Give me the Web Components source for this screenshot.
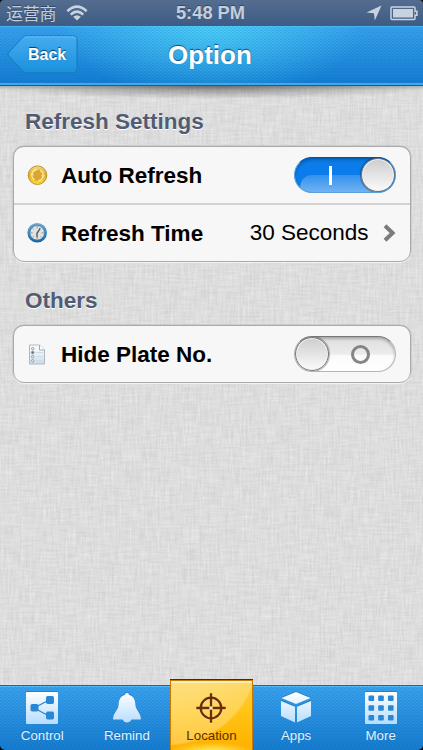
<!DOCTYPE html>
<html lang="en">
<head>
<meta charset="utf-8">
<title>Option</title>
<style>
html,body{margin:0;height:100%;background:#000;overflow:hidden}
body{font-family:"Liberation Sans","Noto Sans CJK SC",sans-serif}
</style>
</head>
<body>
<option-screen></option-screen>
<script>
const define = (name, html) => customElements.define(name, class extends HTMLElement {
  connectedCallback() {
    if (this.shadowRoot) return;
    const t = document.createElement('template');
    t.innerHTML = html(this);
    this.attachShadow({mode:'open'}).append(t.content.cloneNode(true));
  }
});

/* Fine dot mesh shared by both blue bars */
const mesh = 'radial-gradient(circle at 1px 1px,rgba(0,50,120,.17) .5px,transparent 1.1px) 0 0/4px 3px,radial-gradient(circle at 1px 1px,rgba(0,50,120,.17) .5px,transparent 1.1px) 2px 1.5px/4px 3px';

define('status-bar', () => `
<style>
:host{display:grid;grid-template-columns:1fr auto 1fr;align-items:center;height:26px;box-sizing:border-box;padding:0 5px 0 6px;background:linear-gradient(#546d8f,#3d5b84);color:#c5cedb;text-shadow:0 -1px 0 rgba(30,45,75,.55);border-radius:4px 4px 0 0}
.l,.r{display:flex;align-items:center}
.r{justify-content:flex-end;gap:8px}
.l span{font:17px/26px "Noto Sans CJK SC",sans-serif;letter-spacing:-.2px}
.l svg{margin-left:10px}
b{font-size:18.3px;line-height:26px;margin-right:3px}
svg{display:block}
</style>
<div class="l"><span>运营商</span><svg width="22" height="16" viewBox="0 0 22 16" fill="none" stroke="#c9d3df" stroke-width="2.6"><path d="M1.4 6.2Q11-2.8 20.6 6.2M4.7 9.6Q11 3.7 17.3 9.6"/><path d="M7.2 11.8Q11 8.6 14.8 11.8L11 15.6Z" fill="#c9d3df" stroke="none"/></svg></div>
<b>5:48 PM</b>
<div class="r"><svg width="16" height="16" viewBox="0 0 16 16"><path d="M15.5.5 8.8 15.5 8 8.3.5 7.6Z" fill="#c9d3df"/></svg>
<svg width="28" height="15" viewBox="0 0 28 15"><rect x="1" y="1" width="24" height="12.5" rx="1" fill="none" stroke="#c9d3df" stroke-width="1.5"/><path d="M3 3h20v8.5H3zM25 4.5h2.7v5.5H25z" fill="#c9d3df"/><path d="M24.6 6h1.5v2.5h-1.5z" fill="#4a6489"/></svg></div>`);

define('nav-bar', () => `
<style>
:host{display:grid;grid-template-columns:1fr auto 1fr;align-items:center;height:60px;box-sizing:border-box;padding:0 9px 2px 6px;
background:${mesh},radial-gradient(ellipse 155px 75px at 50% -5%,rgba(83,224,255,.8),rgba(60,190,250,0) 100%),linear-gradient(#38a6f2,#137fd6);
border-bottom:1px solid #1b5c8b;box-shadow:inset 0 -2px 0 #3cabe9,inset 0 1px 0 rgba(90,200,255,.5);position:relative;z-index:1}
h1{margin:0;font-size:26px;line-height:58px;color:#fff;text-shadow:0 -1px 1px rgba(0,45,100,.75)}
.b{display:grid;width:72px;height:40px;align-items:center;margin-top:0}
.b>*{grid-area:1/1}
.b span{color:#fff;font-weight:bold;font-size:16px;padding:0 0 0 22px;text-shadow:0 -1px 1px #063b70;z-index:1}
</style>
<div class="b"><svg width="72" height="40"><defs><linearGradient id="g" x2="0" y2="1"><stop stop-color="#46acf0"/><stop offset="1" stop-color="#1991dc"/></linearGradient></defs><path d="M17 2Q18.5 .8 21 .8H67Q71 .8 71 4.8V34Q71 37.8 67 37.8H21Q18.5 37.8 17 36.5L3 21.3Q.8 19.2 3 17Z" fill="url(#g)" stroke="#1679bd"/><path d="M18 2.6Q19 1.8 21 1.8H67Q70 1.8 70 4" fill="none" stroke="#74c5f8" opacity=".7"/></svg><span>Back</span></div>
<h1><slot></slot></h1><div></div>`);

/* Woven linen backdrop: two stretched noise layers crossed over each other */
define('linen-page', () => `
<style>
:host{display:grid;height:599px;background:#dadada;overflow:hidden}
svg,.c{grid-area:1/1}
.c{padding:21px 13px 0;background:radial-gradient(ellipse 55% 13px at 50% 0,rgba(0,0,0,.42),transparent),linear-gradient(rgba(0,0,0,.16),transparent 4px)}
</style>
<svg width="423" height="599"><defs>
<filter id="v" x="0" y="0" width="1" height="1" color-interpolation-filters="sRGB"><feTurbulence type="fractalNoise" baseFrequency=".5 .05" numOctaves="3" seed="4"/><feColorMatrix values=".16 0 0 0 .787 .16 0 0 0 .787 .16 0 0 0 .787 0 0 0 0 1"/></filter>
<filter id="h" x="0" y="0" width="1" height="1" color-interpolation-filters="sRGB"><feTurbulence type="fractalNoise" baseFrequency=".05 .5" numOctaves="3" seed="9"/><feColorMatrix values=".16 0 0 0 .787 .16 0 0 0 .787 .16 0 0 0 .787 0 0 0 0 1"/></filter></defs>
<rect width="423" height="599" filter="url(#v)"/><rect width="423" height="599" filter="url(#h)" opacity=".45"/></svg>
<div class="c"><slot></slot></div>`);

define('settings-group', el => `
<style>
:host{display:block;margin-bottom:24px}
h2{margin:0 0 10px 12px;font-size:22.5px;line-height:29px;color:#515b73;text-shadow:0 1px 0 #fff}
.box{box-sizing:border-box;width:398px;border:1.5px solid #aaa;border-radius:11px;background:#f7f7f7;box-shadow:0 1px 0 #f2f2f2,0 0 0 .5px #bbb;overflow:hidden}
</style>
<h2>${el.getAttribute('heading')}</h2><div class="box"><slot></slot></div>`);

define('settings-row', () => `
<style>
:host{display:flex;align-items:center;height:56px;padding:0 13.5px 0 13px;color:#000;font-size:22.5px}
:host([divided]){border-top:2px solid #d2d2d2;}
.i{display:flex;width:21px;margin-right:13px}
b{flex:1;padding-top:2px}
</style>
<div class="i"><slot name="icon"></slot></div><b><slot></slot></b><slot name="end"></slot>`);

define('row-value', () => `
<style>:host{display:flex;align-items:center;gap:14px}</style>
<span><slot></slot></span><svg width="14" height="18" viewBox="0 0 14 18"><path d="M2 1.8 9.6 9 2 16.2" fill="none" stroke="#7c7c7c" stroke-width="4"/></svg>`);

define('toggle-switch', el => {
  const on = el.hasAttribute('on');
  return `
<style>
:host{display:flex;align-items:center;justify-content:${on?'flex-end':'flex-start'};width:102px;height:36px;box-sizing:border-box;border-radius:18px;border:1px solid ${on?'#5b9fdd':'#b5b5b5'};border-top-color:${on?'#06509f':'#777'};
background:${on?'#0b7cea':'linear-gradient(#dedede,#ececec 50%,#fbfbfb 55%,#fff)'};box-shadow:inset 0 2px 3px rgba(0,0,0,.25);overflow:hidden;margin-right:.5px}
.k{width:34px;height:34px;box-sizing:border-box;border-radius:50%;border:1px solid #777;background:linear-gradient(#cdcdcd,#fbfbfb);box-shadow:0 0 1px 1px rgba(0,0,0,.3),inset 0 0 0 1px #f2f2f2;flex:none;z-index:2}
.t{flex:1;align-self:stretch;display:grid;place-items:center}
.t i,.t u{grid-area:1/1}
.t u{align-self:end;justify-self:stretch;height:17px;margin:0 -16px 0 5px;border-radius:12px 0 0 12px/14px 0 0 4px;background:linear-gradient(rgba(255,255,255,.16),rgba(255,255,255,.42))}
.t i{width:3px;height:19px;background:#fff;z-index:1;margin-left:4px}
.t s{width:19px;height:19px;box-sizing:border-box;border:3px solid #858585;border-radius:50%;margin-right:3px}
</style>${on?'<div class="t"><u></u><i></i></div><div class="k"></div>':'<div class="k"></div><div class="t"><s></s></div>'}`;
});

const rowIcons = {
refresh:`<defs><linearGradient id="a" x2="0" y2="1"><stop stop-color="#f4da79"/><stop offset=".5" stop-color="#e4ad25"/><stop offset="1" stop-color="#f7df35"/></linearGradient></defs><circle cx="10.5" cy="10.2" r="9.3" fill="url(#a)" stroke="#b38b2b" stroke-width=".9"/><circle cx="10.5" cy="10.2" r="5.6" fill="#dba436" stroke="#fbe88f" stroke-width="1.5" stroke-dasharray="13.6 4" transform="rotate(-60 10.5 10.2)"/><path d="M14 10.2h4l-2 2.6zM3 10.2h4l-2-2.6z" fill="#fbe88f"/>`,
clock:`<defs><linearGradient id="a" x2="0" y2="1"><stop stop-color="#6dacd3"/><stop offset="1" stop-color="#1663a4"/></linearGradient></defs><circle cx="10.2" cy="9.8" r="9.8" fill="url(#a)"/><g transform="translate(-.3 -.7)"><circle cx="10.5" cy="10.5" r="7.3" fill="#dfe2e2" stroke="#3c7398" stroke-width=".7"/><path d="M10.5 4v2M10.5 15v2M4 10.5h2M15 10.5h2M6 6l1 1M15 15l-1-1M6 15l1-1" stroke="#8c9499"/><path d="M13.6 5.8 10.3 11M10.3 10.5V15" stroke="#52595e" stroke-width="1.4" fill="none"/></g>`,
list:`<defs><linearGradient id="a" x2="0" y2="1"><stop stop-color="#fff"/><stop offset="1" stop-color="#cbdcea"/></linearGradient></defs><path d="M2.5 1h10l5 5v14h-15z" fill="url(#a)" stroke="#b2b7bd"/><path d="M12.5 1v5h5" fill="#fff" stroke="#a5abb2"/><g fill="#e8edf2" stroke="#9097a0" stroke-width=".9"><circle cx="5.7" cy="4.6" r="1.2"/><circle cx="5.7" cy="8.5" r="1.3" fill="#5a6b82"/><circle cx="5.7" cy="12.6" r="1.2"/><circle cx="5.7" cy="16.7" r="1.2"/></g><path d="M9 8.5h7M9 12.6h7M9 16.7h7" stroke="#cfdae5"/>`};
define('row-icon', el => `<style>:host{display:block;height:21px}svg{display:block}</style><svg width="21" height="21" viewBox="0 0 21 21">${rowIcons[el.getAttribute('name')]}</svg>`);

const tabIcons = {
control:`<rect width="32" height="32" rx="1" fill="url(#w)"/><path d="m8 16 15-8M8 16l15 8" stroke="#2888d6" stroke-width="1.4"/><g fill="#2888d6"><rect x="4.5" y="12" width="8" height="7.5" rx="1.7"/><rect x="20" y="4" width="8" height="8" rx="1.7"/><rect x="20" y="19.5" width="8" height="8" rx="1.7"/></g>`,
remind:`<path d="M16 .9Q17.9.9 18.2 3C22.6 4.3 24.1 7.5 24.4 12.5 24.8 19 29.8 20 30 27.4H20.5Q19 30.4 16 30.4T11.5 27.4H2C2.2 20 7.2 19 7.6 12.5 7.9 7.5 9.4 4.3 13.8 3Q14.1.9 16 .9Z" fill="url(#w)"/>`,
location:`<g fill="none" stroke="#6b2d08" stroke-width="2.3"><circle cx="16" cy="16" r="10.3"/><path d="M16 1.3V14.5M16 17.5V30.7M1.3 16H14.5M17.5 16H30.7"/><circle cx="16" cy="16" r="1.5" stroke="none" fill="#ffeebb"/></g>`,
apps:`<path d="M16 0 30.5 6 16 12 1.5 6ZM1 9l14 5.7V30.5L1 24zM31 9 17 14.7V30.5L31 24z" fill="url(#w)"/>`,
more:`<rect width="32" height="32" rx=".8" fill="url(#w)"/><g fill="#2888d6">${[3.5,13.2,23].map(y=>[3.5,13.2,23].map(x=>`<rect x="${x}" y="${y}" width="5.6" height="5.6" rx="1"/>`).join('')).join('')}</g>`};
define('tab-item', el => {
  const n = el.getAttribute('icon');
  return `
<style>
:host{display:flex;flex-direction:column;align-items:center;height:65px;box-sizing:border-box;padding-top:7px;color:#e0f2ff;font-size:13.3px;text-shadow:0 -1px 1px rgba(0,60,120,.3)}
svg{display:block;filter:drop-shadow(0 -1px 0 rgba(0,60,120,.25))}
span{line-height:16px;margin-top:4px}
:host([active]){width:83px;justify-self:center;margin-top:-5px;height:70px;padding-top:11px;color:#593000;text-shadow:none;border:solid #c87a08;border-width:1px 1px 0;
background:radial-gradient(ellipse 42px 9px at 50% 102%,#fff15e,transparent),radial-gradient(circle at -4px -27px,rgba(255,248,215,.42) 40px,rgba(255,248,215,.3) 90px,transparent 92px),linear-gradient(#fdcb3a,#ffc415 45%,#ffb000);box-shadow:inset 0 2px 0 #fff1b5,0 -1px 0 #4d2a0b}
:host([active]) svg{filter:drop-shadow(0 1px 0 rgba(255,255,255,.4))}
</style>
<svg width="32" height="32" viewBox="0 0 32 32"><defs><linearGradient id="w" gradientUnits="userSpaceOnUse" x1="0" y1="0" x2="0" y2="32"><stop stop-color="#fff"/><stop offset="1" stop-color="#b5dcff"/></linearGradient></defs>${tabIcons[n]}</svg><span><slot></slot></span>`;
});

define('tab-bar', () => `
<style>:host{display:grid;grid-template-columns:repeat(5,1fr);height:65px;background:${mesh},linear-gradient(#3ba7f3,#167fd2);box-shadow:inset 0 1px 0 #176ba2,inset 0 2px 0 #4db6f6;border-radius:0 0 5px 5px;position:relative}</style><slot></slot>`);

define('option-screen', () => `
<style>:host{display:flex;flex-direction:column;width:423px;height:750px}</style>
<status-bar></status-bar>
<nav-bar>Option</nav-bar>
<linen-page>
<settings-group heading="Refresh Settings">
<settings-row><row-icon slot="icon" name="refresh"></row-icon>Auto Refresh<toggle-switch slot="end" on></toggle-switch></settings-row>
<settings-row divided><row-icon slot="icon" name="clock"></row-icon>Refresh Time<row-value slot="end">30 Seconds</row-value></settings-row>
</settings-group>
<settings-group heading="Others">
<settings-row><row-icon slot="icon" name="list"></row-icon>Hide Plate No.<toggle-switch slot="end"></toggle-switch></settings-row>
</settings-group>
</linen-page>
<tab-bar>
<tab-item icon="control">Control</tab-item><tab-item icon="remind">Remind</tab-item><tab-item icon="location" active>Location</tab-item><tab-item icon="apps">Apps</tab-item><tab-item icon="more">More</tab-item>
</tab-bar>`);
</script>
</body>
</html>
